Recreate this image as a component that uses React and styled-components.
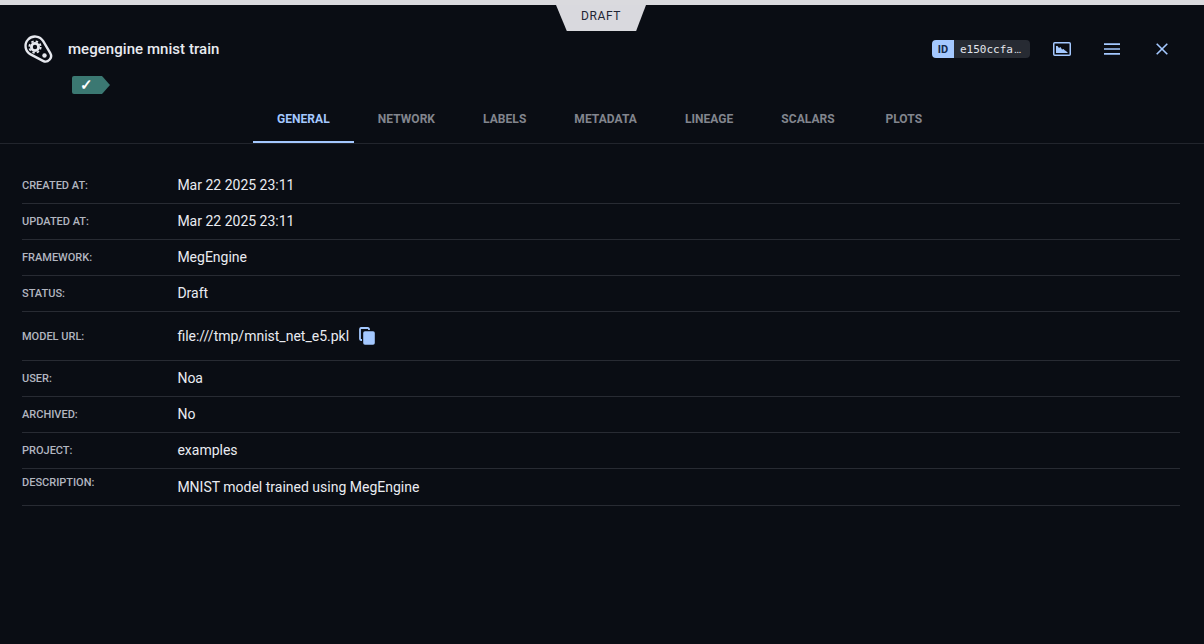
import React from "react";
import styled, { createGlobalStyle } from "styled-components";

const Global = createGlobalStyle`
  html, body { margin: 0; padding: 0; background: #0a0d14; }
  body { font-family: Roboto, "Liberation Sans", sans-serif; overflow: hidden; }
`;
const Page = styled.div`
  width: 1204px; height: 644px; background: #0a0d14; position: relative; overflow: hidden;
  border-top: 5px solid #dadade; box-sizing: border-box;
`;
const DraftFlag = styled.div`
  position: absolute; top: 0; left: 556px; width: 90px; height: 26px;
  background: #d9d9de; clip-path: polygon(0 0, 100% 0, 89% 100%, 12% 100%);
  color: #1f2535; font-size: 12px; letter-spacing: 0.6px; font-weight: 400;
  display: flex; align-items: center; justify-content: center; padding-bottom: 5px; box-sizing: border-box;
`;
const Header = styled.header`
  height: 139px; box-sizing: border-box; border-bottom: 1px solid #22252d;
  display: flex; flex-direction: column;
`;
const TopRow = styled.div`
  height: 44px; margin-top: 22px; padding: 0 22px; display: flex; align-items: center; gap: 14px;
  box-sizing: border-box;
`;
const Title = styled.h1`
  margin: 0; color: #e8eaf0; font-size: 15px; font-weight: 500; letter-spacing: 0.05px; flex: 1; line-height: 20px;
`;
const IdChip = styled.div`
  display: flex; height: 18px; border-radius: 4px; overflow: hidden; margin-right: -7px;
`;
const IdLabel = styled.span`
  width: 22px; background: #a4c8ff; color: #12294c; font-size: 11px; font-weight: 700;
  display: flex; align-items: center; justify-content: center;
`;
const IdValue = styled.span`
  width: 76px; background: #272b33; color: #e4e6ed; font: 11px "DejaVu Sans Mono", monospace;
  display: flex; align-items: center; padding-left: 6px; box-sizing: border-box; white-space: nowrap;
`;
const Dots = styled.span`
  font-family: Roboto, sans-serif; font-size: 11px; margin-left: 1px;
`;
const IconButton = styled.button`
  width: 50px; height: 32px; padding: 0; margin: 0; border: 0; background: none;
  display: flex; align-items: center; justify-content: center;
`;
const Actions = styled.div`
  display: flex; align-items: center; margin-right: -5px;
`;
const TagRow = styled.div`
  height: 18px; margin: 5px 0 0 72px; display: flex; align-items: center;
`;
const Tag = styled.div`
  width: 38px; height: 18px; background: #3b7872; border-radius: 2px 0 0 2px;
  clip-path: polygon(0 0, 79% 0, 100% 50%, 79% 100%, 0 100%);
  color: #fff; font-size: 15px; font-weight: 700; display: flex; align-items: center; padding-left: 8px; box-sizing: border-box;
`;
const Tabs = styled.nav`
  display: flex; padding-left: 253px; margin-top: auto; height: 47px;
`;
const TabItem = styled.div`
  height: 47px; min-width: 90px; box-sizing: border-box; padding: 0 24px; display: flex; align-items: center; justify-content: center;
  font-size: 12px; font-weight: 700; letter-spacing: 0.05px;
  color: ${(p) => (p.$active ? "#a4c8ff" : "#82858e")};
  border-bottom: 2px solid ${(p) => (p.$active ? "#a4c8ff" : "transparent")};
`;
const Details = styled.section`
  padding: 24px 24px 0 22px;
`;
const Row = styled.div`
  display: flex; align-items: ${(p) => (p.$top ? "flex-start" : "center")};
  min-height: ${(p) => p.$h || 36}px; box-sizing: border-box; border-bottom: 1px solid #282b33;
  padding-top: ${(p) => (p.$top ? 7 : 0)}px;
`;
const Label = styled.div`
  width: 155.4px; flex: none; color: #b2b6c0; font-size: 11px; font-weight: 500;
  line-height: 14px; margin-top: ${(p) => (p.$low ? 2 : 0)}px;
`;
const Value = styled.div`
  color: #e9ebf1; font-size: 14px; line-height: 20px; display: flex; align-items: center; gap: 10px;
  margin-top: ${(p) => (p.$shift === "down" ? 1 : 0)}px;
  margin-bottom: ${(p) => (p.$shift === "up" ? 2 : 0)}px;
`;

const Gear = () => (
  <svg width="32" height="32" viewBox="0 0 32 32" fill="none">
    <path
      d="M21.2 8.19L28.25 20.22A5.5 5.5 0 0 1 20.95 27.87L8.6 21.42A9.5 9.5 0 1 1 21.2 8.19Z"
      stroke="#e6e8ee" strokeWidth="2.4" strokeLinejoin="round"
    />
    <circle cx="13" cy="14" r="3.6" stroke="#e6e8ee" strokeWidth="2.8" />
    <circle cx="13" cy="14" r="5.7" stroke="#e6e8ee" strokeWidth="1.8" strokeDasharray="2.4 2.08" />
    <circle cx="22.5" cy="22.5" r="2.2" fill="#e6e8ee" />
  </svg>
);
const ScalarIcon = () => (
  <svg width="18" height="14" viewBox="0 0 18 14" fill="none">
    <rect x="0.75" y="0.75" width="16.5" height="12.5" rx="1" stroke="#a4c8ff" strokeWidth="1.5" />
    <path d="M3 11V4h1.5L6 6l1.5-1L9 7.5l1.5-.5L12 8.5l1 .5 2 2z" fill="#a4c8ff" />
  </svg>
);
const MenuIcon = () => (
  <svg width="16" height="12" viewBox="0 0 16 12" fill="none">
    <path d="M0 1.2h16M0 6h16M0 10.8h16" stroke="#a4c8ff" strokeWidth="1.7" />
  </svg>
);
const CloseIcon = () => (
  <svg width="12" height="12" viewBox="0 0 12 12" fill="none">
    <path d="M.7.7l10.6 10.6M11.3.7L.7 11.3" stroke="#a4c8ff" strokeWidth="1.6" />
  </svg>
);
const CopyIcon = () => (
  <svg width="16" height="18" viewBox="0 0 16 18" fill="none">
    <path d="M3 13H2a1.2 1.2 0 0 1-1-1.2V2.2A1.2 1.2 0 0 1 2 1h6.5A1.2 1.2 0 0 1 10 2.2V3" stroke="#a4c8ff" strokeWidth="1.8" />
    <rect x="4.2" y="4.2" width="11.6" height="13.5" rx="1.8" fill="#a4c8ff" />
  </svg>
);

const tabs = ["GENERAL", "NETWORK", "LABELS", "METADATA", "LINEAGE", "SCALARS", "PLOTS"];
const rows = [
  { label: "CREATED AT:", value: "Mar 22 2025 23:11", shift: "up" },
  { label: "UPDATED AT:", value: "Mar 22 2025 23:11", shift: "up" },
  { label: "FRAMEWORK:", value: "MegEngine", shift: "up" },
  { label: "STATUS:", value: "Draft", shift: "up" },
  { label: "MODEL URL:", value: "file:///tmp/mnist_net_e5.pkl", h: 49, copy: true, low: true },
  { label: "USER:", value: "Noa", shift: "up" },
  { label: "ARCHIVED:", value: "No", shift: "up" },
  { label: "PROJECT:", value: "examples", shift: "up" },
  { label: "DESCRIPTION:", value: "MNIST model trained using MegEngine", h: 37, top: true, shift: "down" },
];

export default function App() {
  return (
    <Page>
      <Global />
      <DraftFlag>DRAFT</DraftFlag>
      <Header>
        <TopRow>
          <Gear />
          <Title>megengine mnist train</Title>
          <IdChip>
            <IdLabel>ID</IdLabel>
            <IdValue>e150ccfa<Dots>…</Dots></IdValue>
          </IdChip>
          <Actions>
            <IconButton><ScalarIcon /></IconButton>
            <IconButton><MenuIcon /></IconButton>
            <IconButton><CloseIcon /></IconButton>
          </Actions>
        </TopRow>
        <TagRow><Tag>✓</Tag></TagRow>
        <Tabs>
          {tabs.map((t, i) => <TabItem key={t} $active={i === 0}>{t}</TabItem>)}
        </Tabs>
      </Header>
      <Details>
        {rows.map((r) => (
          <Row key={r.label} $h={r.h} $top={r.top}>
            <Label $low={r.low}>{r.label}</Label>
            <Value $shift={r.shift}>{r.value}{r.copy && <CopyIcon />}</Value>
          </Row>
        ))}
      </Details>
    </Page>
  );
}
